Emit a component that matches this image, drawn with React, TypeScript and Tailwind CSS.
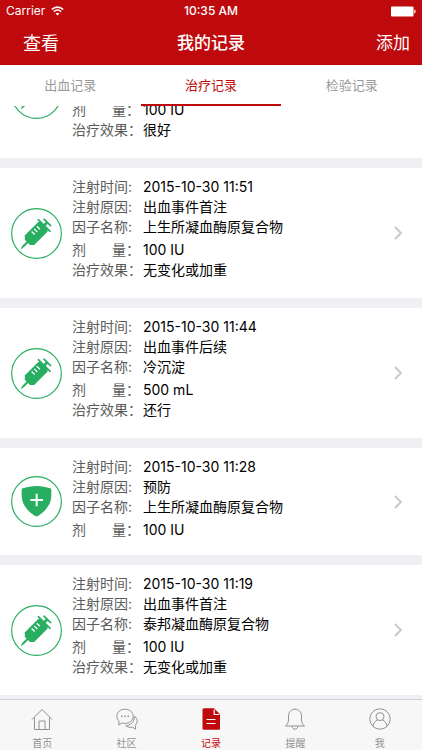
import React from "react";

type RecordItem = {
  id: number;
  type: "syringe" | "shield";
  time?: string;
  reason?: string;
  factor?: string;
  dose: string;
  effect?: string;
};

const records: RecordItem[] = [
  { id: 1, type: "syringe", dose: "100 IU", effect: "很好" },
  { id: 2, type: "syringe", time: "2015-10-30 11:51", reason: "出血事件首注", factor: "上生所凝血酶原复合物", dose: "100 IU", effect: "无变化或加重" },
  { id: 3, type: "syringe", time: "2015-10-30 11:44", reason: "出血事件后续", factor: "冷沉淀", dose: "500 mL", effect: "还行" },
  { id: 4, type: "shield", time: "2015-10-30 11:28", reason: "预防", factor: "上生所凝血酶原复合物", dose: "100 IU" },
  { id: 5, type: "syringe", time: "2015-10-30 11:19", reason: "出血事件首注", factor: "泰邦凝血酶原复合物", dose: "100 IU", effect: "无变化或加重" },
];

const tabs = ["出血记录", "治疗记录", "检验记录"];

function SyringeIcon() {
  return (
    <svg viewBox="0 0 153 153" className="size-[51px] shrink-0" aria-hidden="true">
      <circle cx="76.5" cy="76.5" r="74.5" fill="none" stroke="#27ae60" strokeWidth="3.5" />
      <g transform="rotate(45 76 76)" fill="#27ae60">
        <rect x="60" y="27" width="32" height="5" rx="2" />
        <rect x="72" y="30" width="8" height="14" />
        <rect x="49" y="40" width="54" height="5" rx="2" />
        <path d="M59 44h34l3 5v56l-9 9h-22l-9-9V49z" />
        <path d="M73 112h6v18l-2 11h-2l-2-11z" />
        <path d="M62 60h13M62 71h13M62 82h13" stroke="#fff" strokeWidth="4" />
      </g>
    </svg>
  );
}

function ShieldIcon() {
  return (
    <svg viewBox="0 0 153 153" className="size-[51px] shrink-0" aria-hidden="true">
      <circle cx="76.5" cy="76.5" r="74.5" fill="none" stroke="#27ae60" strokeWidth="3.5" />
      <path
        d="M76.500 30c14 0 29 3 41 7 2 1 3.500 2 3.500 5v18C121 84 104 105 82 119c-3 2-8 2-11 0C49 105 32 84 32 60V42c0-3 1.500-4 3.500-5 12-4 27-7 41-7z"
        fill="#27ae60"
      />
      <path d="M77 53v38M58 72h38" stroke="#fff" strokeWidth="6" />
    </svg>
  );
}

function Row({ label, value }: { label: React.ReactNode; value: string }) {
  return (
    <div className="flex h-5 items-center leading-5">
      <dt className="w-[71px] shrink-0 text-[#5a5a5a]">{label}</dt>
      <dd className="text-black">{value}</dd>
    </div>
  );
}

function RecordCard({ item }: { item: RecordItem }) {
  return (
    <li>
      <a
        href={`#record-${item.id}`}
        className={`flex items-center bg-white pr-5 pl-[11px] ${item.effect ? "min-h-[130px]" : ""}`}
      >
        {item.type === "syringe" ? <SyringeIcon /> : <ShieldIcon />}
        <dl className="ml-2.5 flex flex-1 flex-col justify-end self-stretch pt-[9px] pb-[15px] text-[14px]">
          {item.time && <Row label="注射时间:" value={item.time} />}
          {item.reason && <Row label="注射原因:" value={item.reason} />}
          {item.factor && <Row label="因子名称:" value={item.factor} />}
          <div className="pt-[3px]">
            <Row
              label={
                <span className="flex">
                  <span className="flex w-[54px] justify-between">
                    <span>剂</span>
                    <span>量</span>
                  </span>
                  {"\uff1a"}
                </span>
              }
              value={item.dose}
            />
          </div>
          {item.effect && (
            <div className="pb-[3px]">
              <Row label={"治疗效果\uff1a"} value={item.effect} />
            </div>
          )}
        </dl>
        <svg viewBox="0 0 8 14" className="h-3.5 w-2 shrink-0" fill="none" stroke="#c7c7cc" strokeWidth="1.8" aria-hidden="true">
          <path d="M1 1l6 6-6 6" />
        </svg>
      </a>
    </li>
  );
}

const navItems = [
  {
    name: "首页",
    icon: (
      <>
        <path d="M1 11.500L11 1.500l10 10" />
        <path d="M3.500 9.500v12h15v-12" />
        <path d="M8 21.500v-8.500h6v8.500" />
      </>
    ),
  },
  {
    name: "社区",
    icon: (
      <>
        <path d="M9 1.200c4.600 0 8.200 3 8.200 7s-3.600 7.200-8.200 7.200c-1 0-2-.1-2.900-.4L2.600 16.800l.6-3.500C1.700 12 .8 10.200.8 8.200c0-4 3.600-7 8.200-7z" />
        <path d="M18.600 8.300c1.600 1.200 2.600 2.800 2.600 4.700 0 1.700-.8 3.200-2 4.300l.5 3.900-3.200-2c-2.300.5-4.900 0-6.700-1.500 4.500-.3 8.600-3.700 8.800-9.400z" />
        <path d="M5 8.300h1.500M8.300 8.300h1.500M11.600 8.300h1.500" strokeWidth="1.600" />
      </>
    ),
  },
  {
    name: "记录",
    active: true,
    icon: (
      <>
        <path d="M4 .3h10l6 6v14a1.500 1.500 0 0 1-1.500 1.500H4a1.500 1.500 0 0 1-1.500-1.500V1.800A1.500 1.500 0 0 1 4 .3z" fill="currentColor" stroke="none" />
        <path d="M14.200 1.500v5h5" stroke="#fff" strokeWidth="1.200" />
        <path d="M6.500 11.500h9M6.500 15.500h9" stroke="#fff" strokeWidth="1.200" />
      </>
    ),
  },
  {
    name: "提醒",
    icon: (
      <>
        <path d="M1.500 18c2-1.500 3-3.500 3-7V8c0-4 2.800-6.800 6.500-6.800S17.500 4 17.500 8v3c0 3.500 1 5.500 3 7z" />
        <path d="M8 18.200c.3 2 1.500 3 3 3s2.700-1 3-3" />
      </>
    ),
  },
  {
    name: "我",
    icon: (
      <>
        <circle cx="11" cy="11" r="10.200" />
        <circle cx="11" cy="8.600" r="4" />
        <path d="M4 18.200c.3-3.500 2.500-5.500 4.700-6.300M18 18.200c-.3-3.500-2.500-5.500-4.700-6.300" />
      </>
    ),
  },
];

export default function App() {
  return (
    <div className="flex h-dvh flex-col bg-[#efeff4] font-['Inter','Noto_Sans_CJK_SC',sans-serif]">
      <header className="shrink-0 bg-[#be0a0c] text-white">
        {/* 状态栏 */}
        <div className="grid h-[22px] grid-cols-3 items-center px-1.5 text-[12px]">
          <div className="flex items-center gap-1.5">
            <span>Carrier</span>
            <svg viewBox="0 0 13 10" className="h-2.5 w-[13px]" fill="none" stroke="#fff" strokeWidth="1.600" aria-hidden="true">
              <path d="M.8 3.500c3.300-3.200 8.100-3.200 11.400 0M2.800 5.700c2.200-2 5.200-2 7.400 0" />
              <path d="M6.500 9.500L4.500 7.400c1.200-1 2.800-1 4 0z" fill="#fff" stroke="none" />
            </svg>
          </div>
          <span className="text-center font-medium">10:35 AM</span>
          <svg viewBox="0 0 25 11" className="h-[11px] w-[25px] justify-self-end" fill="#fff" aria-hidden="true">
            <rect x="0" y="0.500" width="22.500" height="10" rx="1" />
            <path d="M23.300 3.500c1.800.5 1.800 3.500 0 4z" />
          </svg>
        </div>
        {/* 导航栏 */}
        <div className="grid h-[43px] grid-cols-3 items-center px-3 text-[17px]">
          <button type="button" className="justify-self-start pl-[11px] text-[18px]">查看</button>
          <h1 className="text-center font-medium">我的记录</h1>
          <button type="button" className="justify-self-end">添加</button>
        </div>
      </header>

      <div role="tablist" className="grid h-[41px] shrink-0 grid-cols-3 bg-white text-[13px]">
        {tabs.map((tab, index) => (
          <button
            key={tab}
            type="button"
            role="tab"
            aria-selected={index === 1}
            className={`border-b-2 pt-0.5 ${
              index === 1 ? "border-[#be0a0c] text-[#be0a0c]" : "border-transparent text-[#999]"
            }`}
          >
            {tab}
          </button>
        ))}
      </div>

      {/* 记录列表,默认停在最底部 */}
      <main className="flex min-h-0 flex-1 flex-col-reverse overflow-y-auto [scrollbar-width:none]">
        <ul className="flex flex-col gap-2.5 pb-1">
          {records.map((item) => (
            <RecordCard key={item.id} item={item} />
          ))}
        </ul>
      </main>

      <nav className="grid h-[51px] shrink-0 grid-cols-5 border-t border-[#d0d0d8] bg-[#f7f7f7] text-[10px]">
        {navItems.map((item) => (
          <a
            key={item.name}
            href={`#${item.name}`}
            className={`flex flex-col items-center justify-between pt-2 ${item.active ? "text-[#be0a0c]" : "text-[#929292]"}`}
          >
            <svg viewBox="0 0 22 22" className="size-[22px]" fill="none" stroke="currentColor" strokeWidth="1" aria-hidden="true">
              {item.icon}
            </svg>
            <span className="leading-[14px]">{item.name}</span>
          </a>
        ))}
      </nav>
    </div>
  );
}
